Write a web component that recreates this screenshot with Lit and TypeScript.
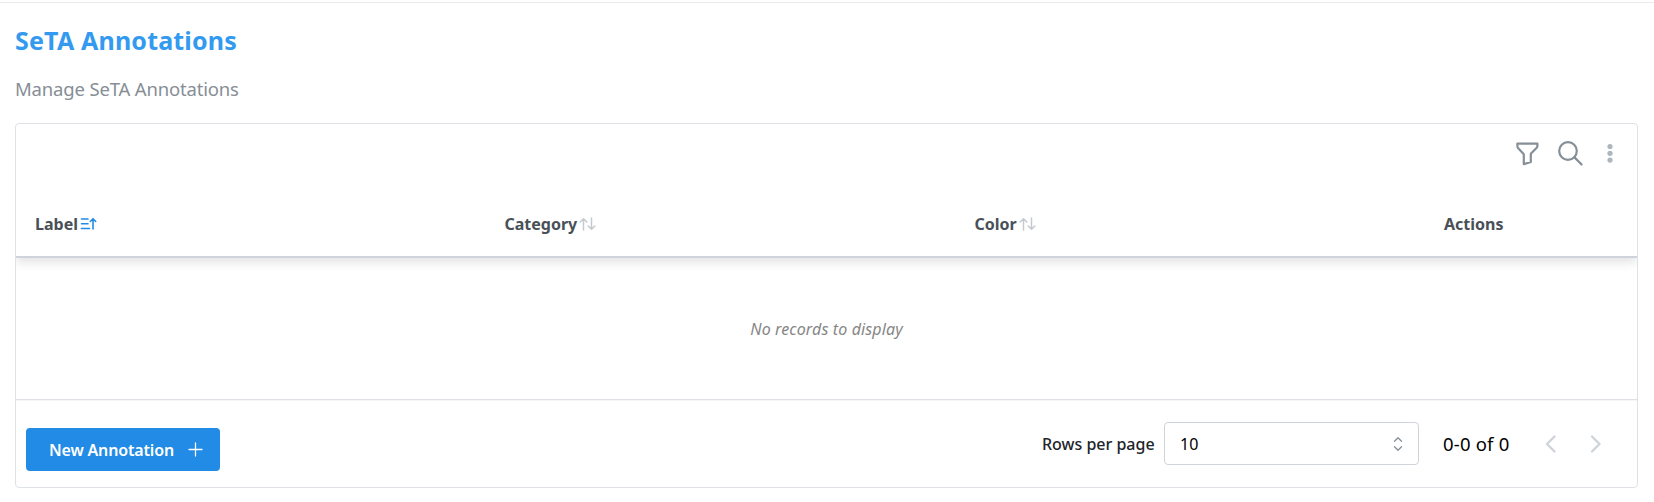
import { LitElement, html, css, svg } from "lit";
import { customElement } from "lit/decorators.js";

const sortIcon = svg`<path d="M4.5 14V2.8M1.2 6 4.5 2.7 7.8 6M12.5 2v11.2M9.2 10l3.3 3.3 3.3-3.3"/>`;

@customElement("app-root")
export class AppRoot extends LitElement {
  static styles = css`
    :host { display: block; height: 502px; overflow: hidden; background: #fff; box-sizing: border-box; padding-top: 2px;
      font-family: "Noto Sans", "Open Sans", sans-serif; font-size: 16px; color: #000; }
    * { box-sizing: border-box; }
    svg { display: block; fill: none; stroke: currentColor; stroke-linecap: round; stroke-linejoin: round; flex: none; }
    .page { border-top: 1px solid #e9ecef; padding: 18px 16px 0 15px; }
    h1 { margin: 0; height: 38px; line-height: 38px; font-size: 25px; font-weight: 700; color: #339af0; white-space: nowrap; letter-spacing: 0.17px; }
    .sub { margin: 11px 0 0; height: 38px; line-height: 38px; font-size: 18.5px; color: #868e96; white-space: nowrap; letter-spacing: -0.17px; }
    .card { margin-top: 15px; width: 1623px; height: 365px; border: 1px solid #dee2e6; border-radius: 4px; display: flex; flex-direction: column; overflow: hidden; }
    .tools { height: 60px; flex: none; display: flex; justify-content: flex-end; align-items: center; padding: 0 13px 2px 0; color: #868e96; }
    .tools .find { margin-left: 15px; }
    .tools .more { margin-left: 12px; color: #adb5bd; }
    .head { height: 74px; flex: none; display: grid; grid-template-columns: 469.5px 470px 469.5px 1fr; padding: 29px 0 0 19px; border-bottom: 2px solid #ced4da; box-shadow: 0 4px 10px rgba(0,0,0,.12); clip-path: inset(0 0 -20px 0); }
    .th { display: flex; height: 22px; align-items: center; font-weight: 700; font-size: 16px; color: #495057; }
    .th svg { color: #c4cad0; stroke-width: 1.5; margin-left: 2px; }
    .th .on { color: #228be6; stroke-width: 1.6; margin-left: 2px; }
    .body { height: 141px; flex: none; display: flex; align-items: center; justify-content: center; font-style: italic; color: #868686; padding-top: 1px; letter-spacing: 0.13px; }
    .foot { flex: 1; border-top: 1px solid #dee2e6; box-shadow: inset 0 1px 1px #f4f5f6; display: flex; justify-content: space-between; align-items: flex-start; padding: 22px 32px 0 10px; }
    .btn { margin-top: 6px; width: 194px; height: 43px; border: 0; border-radius: 4px; background: #228be6; color: #fff; display: flex; align-items: center; padding: 0 17px 0 23px; justify-content: space-between; font: 600 16px "Noto Sans", sans-serif; letter-spacing: -0.16px; }
    .pager { display: flex; align-items: center; height: 43px; }
    .rows { width: 122px; font-weight: 500; color: #212529; white-space: nowrap; }
    .select { width: 255px; height: 43px; border: 1px solid #ced4da; border-radius: 4px; display: flex; align-items: center; justify-content: space-between; padding: 0 12.5px 0 15px; color: #000; }
    .select svg { color: #868e96; }
    .range { width: 108px; padding: 0 0 1px 24px; font-size: 18.5px; letter-spacing: 0.2px; white-space: nowrap; }
    .nav { display: flex; gap: 24px; color: #ced4da; padding-left: 14px; }
    .t { white-space: nowrap; }
  `;

  render() {
    const th = (name: string) => html`<div class="th"><span class="t">${name}</span><svg width="17" height="16" viewBox="0 0 17 16">${sortIcon}</svg></div>`;
    return html`<main class="page">
      <h1><span class="t">SeTA Annotations</span></h1>
      <p class="sub"><span class="t">Manage SeTA Annotations</span></p>
      <section class="card">
        <div class="tools">
          <svg width="28" height="28" viewBox="0 0 28 28" stroke-width="2.2"><path d="M4.4 4.6h20v2.5a2.5 2.5 0 0 1-.7 1.7L17.8 14.7v8.2l-7 2.3V15.2L5 8.9a2.5 2.5 0 0 1-.6-1.6z"/></svg>
          <svg class="find" width="28" height="28" viewBox="0 0 28 28" stroke-width="2.2"><circle cx="12" cy="12" r="8.8"/><path d="m18.5 18.4 7.1 7.1"/></svg>
          <svg class="more" width="28" height="28" viewBox="0 0 28 28"><g fill="currentColor" stroke="none"><circle cx="14" cy="7.5" r="2.6"/><circle cx="14" cy="14.3" r="2.6"/><circle cx="14" cy="21.1" r="2.6"/></g></svg>
        </div>
        <div class="head">
          <div class="th"><span class="t">Label</span><svg class="on" width="17" height="16" viewBox="0 0 17 16"><path d="M1.5 3h6.5M1.5 7.7h6.5M1.5 12.5h8M13 13V3M10.3 5.5 13 2.7l2.7 2.8"/></svg></div>
          ${th("Category")}${th("Color")}
          <div class="th"><span class="t">Actions</span></div>
        </div>
        <div class="body"><span class="t">No records to display</span></div>
        <footer class="foot">
          <button class="btn"><span class="t">New Annotation</span><svg width="15" height="15" viewBox="0 0 15 15" stroke-width="1.3"><path d="M7.5 1v13M1 7.5h13"/></svg></button>
          <div class="pager">
            <span class="rows">Rows per page</span>
            <div class="select"><span>10</span><svg width="16" height="16" viewBox="0 0 16 16" stroke-width="1.3"><path d="m4.5 5.2 3.5-3.4 3.5 3.4M4.5 10.8 8 14.2l3.5-3.4"/></svg></div>
            <span class="range">0-0 of 0</span>
            <div class="nav">
              <svg width="20" height="20" viewBox="0 0 20 20" stroke-width="2.4"><path d="M13.5 2.5 6 10l7.5 7.5"/></svg>
              <svg width="20" height="20" viewBox="0 0 20 20" stroke-width="2.4"><path d="m7 2.5 7.5 7.5L7 17.5"/></svg>
            </div>
          </div>
        </footer>
      </section>
    </main>`;
  }
}
